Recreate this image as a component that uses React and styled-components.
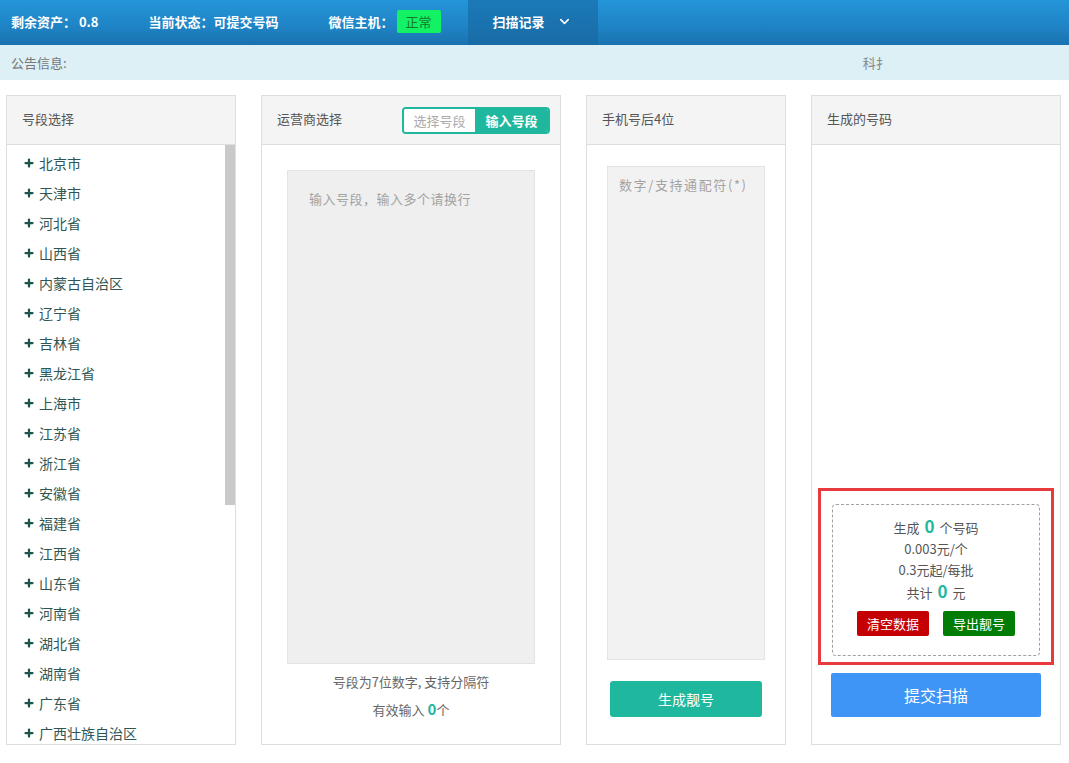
import styled, { createGlobalStyle } from "styled-components";
import { ChevronDown, Plus } from "lucide-react";

const GlobalStyle = createGlobalStyle`
body {
  margin: 0;
  background: #fff;
  font-family: "Noto Sans CJK SC", "Liberation Sans", sans-serif;
  font-size: 13px;
  color: #555;
}
`
const Page = styled.div`
width: 1069px;
height: 763px;
overflow: hidden;
`
const TopBar = styled.header`
height: 45px;
display: flex;
align-items: stretch;
background: linear-gradient(to bottom, #2395d8 0%, #1f85c6 55%, #1a72b0 100%);
color: #fff;
`
const TopItem = styled.div`
display: flex;
align-items: center;
padding: 0 ${p => p.$pr || 50}px 3px ${p => p.$pl || 0}px;
font-size: 13px;
font-weight: 600;
white-space: nowrap;
`
const Badge = styled.span`
display: inline-flex;
align-items: center;
justify-content: center;
width: 44px;
height: 23px;
margin-left: 3px;
background: #13f264;
color: #137a2c;
border-radius: 2px;
font-weight: 400;
`
const Tab = styled.div`
display: flex;
align-items: center;
gap: 12px;
width: 130px;
box-sizing: border-box;
padding: 0 0 3px 25px;
margin-left: -23px;
background: linear-gradient(to bottom, #1c79b8 0%, #186ca6 100%);
font-size: 13px;
font-weight: 600;
`
const Notice = styled.div`
height: 35px;
display: flex;
align-items: center;
padding-left: 11px;
background: #ddf0f6;
color: #777;
font-size: 13px;
`
const Marquee = styled.div`
width: 818px;
overflow: hidden;
white-space: nowrap;
color: #888;
`
const MarqueeText = styled.span`
display: inline-block;
padding-left: 796px;
`
const Columns = styled.main`
display: flex;
gap: 25px;
padding: 15px 0 0 6px;
`
const Panel = styled.section`
width: ${p => p.$w}px;
height: 650px;
box-sizing: border-box;
border: 1px solid #dedede;
display: flex;
flex-direction: column;
background: #fff;
`
const PanelHead = styled.div`
height: 49px;
flex: none;
box-sizing: border-box;
border-bottom: 1px solid #dedede;
background: #f4f4f4;
display: flex;
align-items: center;
justify-content: space-between;
padding: 0 10px 3px 15px;
font-size: 13px;
color: #555;
`
const ListWrap = styled.div`
flex: 1;
display: flex;
min-height: 0;
`
const List = styled.ul`
list-style: none;
margin: 0;
padding: 3px 0 0;
flex: 1;
overflow: hidden;
`
const Track = styled.div`
width: 10px;
flex: none;
background: #fff;
`
const Thumb = styled.div`
height: 360px;
background: #c9c9c9;
`
const Item = styled.li`
height: 30px;
display: flex;
align-items: center;
gap: 4px;
padding-left: 16px;
font-size: 14px;
line-height: 18px;
color: #2f5652;
white-space: nowrap;
`
const Toggle = styled.div`
display: flex;
height: 27px;
box-sizing: border-box;
border: 2px solid #1fb89e;
border-radius: 4px;
overflow: hidden;
margin-top: 3px;
`
const ToggleBtn = styled.span`
display: flex;
align-items: center;
justify-content: center;
width: ${p => p.$active ? 73 : 71}px;
font-size: 13px;
color: ${p => p.$active ? "#fff" : "#aaa"};
background: ${p => p.$active ? "#1fb89e" : "#fff"};
font-weight: ${p => p.$active ? 700 : 400};
`
const Body = styled.div`
flex: 1;
display: flex;
flex-direction: column;
align-items: center;
padding: ${p => p.$pad || "25px 25px 0"};
`
const Area = styled.textarea`
width: 100%;
height: 494px;
flex: none;
box-sizing: border-box;
resize: none;
outline: none;
border: 1px solid #e3e3e3;
background: ${p => p.$bg || "#efefef"};
padding: ${p => p.$pad || "18px 21px"};
font-family: "Noto Sans CJK SC", "Liberation Sans", sans-serif;
font-size: 13px;
letter-spacing: ${p => p.$ls || 0.5}px;

&::placeholder { color: #a3a3a3; }
`
const Hint = styled.p`
margin: ${p => p.$mt}px 0 0;
font-size: 13px;
line-height: 20px;
color: #666;
`
const Num = styled.b`
color: #1fb89e;
font-size: ${p => p.$size || 15}px;
margin: 0 ${p => p.$mx || 0}px;
`
const TealButton = styled.button`
width: 152px;
height: 36px;
margin-top: 21px;
border: none;
border-radius: 3px;
background: #1fb89e;
color: #fff;
font-family: inherit;
font-size: 14px;
`
const Spacer = styled.div`
flex: 1;
`
const Highlight = styled.div`
align-self: stretch;
margin: 0 6px;
padding: 13px 11px 6px;
border: 3px solid #e8393e;
`
const Summary = styled.div`
border: 1px dashed #a0a0a0;
border-radius: 4px;
padding: 10px 0 19px;
display: flex;
flex-direction: column;
align-items: center;
font-size: 13px;
line-height: 21px;
color: #555;
`
const Actions = styled.div`
display: flex;
gap: 14px;
margin-top: 8px;
`
const SmallButton = styled.button`
width: 72px;
height: 25px;
border: none;
border-radius: 2px;
background: ${p => p.$bg};
color: #fff;
font-family: inherit;
font-size: 13px;
padding: 0;
`
const SubmitButton = styled.button`
width: 210px;
height: 44px;
margin: 8px 0 27px;
border: none;
border-radius: 2px;
background: #3e95f6;
color: #fff;
font-family: inherit;
font-size: 16px;
`

const provinces = [
  "北京市", "天津市", "河北省", "山西省", "内蒙古自治区", "辽宁省", "吉林省",
  "黑龙江省", "上海市", "江苏省", "浙江省", "安徽省", "福建省", "江西省",
  "山东省", "河南省", "湖北省", "湖南省", "广东省", "广西壮族自治区"
]

const App = () => {
  return (
    <Page>
      <GlobalStyle />
      <TopBar>
        <TopItem $pl={11}>剩余资产：&nbsp;0.8</TopItem>
        <TopItem>当前状态：可提交号码</TopItem>
        <TopItem>微信主机：<Badge>正常</Badge></TopItem>
        <Tab>扫描记录 <ChevronDown size={15} strokeWidth={2.5} /></Tab>
      </TopBar>
      <Notice>
        公告信息:
        <Marquee><MarqueeText>科扌</MarqueeText></Marquee>
      </Notice>
      <Columns>
        <Panel $w={230}>
          <PanelHead>号段选择</PanelHead>
          <ListWrap>
            <List>
              {provinces.map(name => (
                <Item key={name}>
                  <Plus size={12} strokeWidth={4.5} color="#1b544c" />
                  {name}
                </Item>
              ))}
            </List>
            <Track><Thumb /></Track>
          </ListWrap>
        </Panel>
        <Panel $w={300}>
          <PanelHead>
            运营商选择
            <Toggle>
              <ToggleBtn>选择号段</ToggleBtn>
              <ToggleBtn $active>输入号段</ToggleBtn>
            </Toggle>
          </PanelHead>
          <Body>
            <Area placeholder="输入号段，输入多个请换行" />
            <Hint $mt={8}>号段为7位数字, 支持分隔符</Hint>
            <Hint $mt={7}>有效输入 <Num>0</Num>个</Hint>
          </Body>
        </Panel>
        <Panel $w={200}>
          <PanelHead>手机号后4位</PanelHead>
          <Body $pad="21px 20px 0">
            <Area $bg="#f2f2f2" $pad="8px 11px" $ls={1.6} placeholder="数字/支持通配符(*)" />
            <TealButton>生成靓号</TealButton>
          </Body>
        </Panel>
        <Panel $w={250}>
          <PanelHead>生成的号码</PanelHead>
          <Body $pad="0">
            <Spacer />
            <Highlight>
              <Summary>
                <span>生成 <Num $size={17} $mx={2}>0</Num> 个号码</span>
                <span>0.003元/个</span>
                <span>0.3元起/每批</span>
                <span>共计 <Num $size={17} $mx={2}>0</Num> 元</span>
                <Actions>
                  <SmallButton $bg="#c40000">清空数据</SmallButton>
                  <SmallButton $bg="#037c06">导出靓号</SmallButton>
                </Actions>
              </Summary>
            </Highlight>
            <SubmitButton>提交扫描</SubmitButton>
          </Body>
        </Panel>
      </Columns>
    </Page>
  )
}

export default App
